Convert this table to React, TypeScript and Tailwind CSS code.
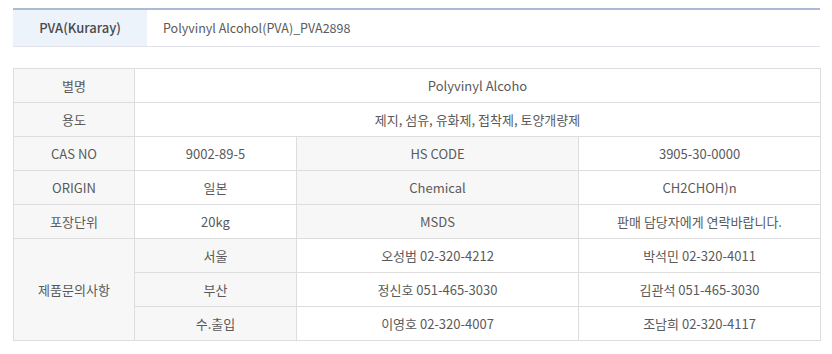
import React from 'react';

const th = 'border border-[#dddddd] bg-[#f7f7f7] font-normal';
const td = 'border border-[#dddddd] bg-white';

const contacts = [
  { region: '서울', a: '오성범 02-320-4212', b: '박석민 02-320-4011' },
  { region: '부산', a: '정신호 051-465-3030', b: '김관석 051-465-3030' },
  { region: '수.출입', a: '이영호 02-320-4007', b: '조남희 02-320-4117' },
];

const App = () => {
  return (
    <div
      className="w-[832px] h-[354px] bg-white px-[13px] pt-[8px] text-[13px] text-[#5a5a5a]"
      style={{ fontFamily: '"Noto Sans CJK KR", "Noto Sans", sans-serif' }}
    >
      <div className="flex h-[39px] w-[807px] border-t-2 border-b border-t-[#a8bcd6] border-b-[#e2e2ea]">
        <div className="flex w-[134px] items-center justify-center bg-[#edf3fa] text-[13px] font-medium text-[#4a4a4a]">
          PVA(Kuraray)
        </div>
        <div className="flex items-center pl-[16px] text-[12.5px]">Polyvinyl Alcohol(PVA)_PVA2898</div>
      </div>

      <table className="mt-[21px] w-[807px] table-fixed border-collapse text-center">
        <colgroup>
          <col className="w-[121px]" />
          <col className="w-[162px]" />
          <col className="w-[282px]" />
          <col className="w-[242px]" />
        </colgroup>
        <tbody>
          <tr className="h-[34px]">
            <th className={th}>별명</th>
            <td className={td} colSpan={3}>Polyvinyl Alcoho</td>
          </tr>
          <tr className="h-[34px]">
            <th className={th}>용도</th>
            <td className={td} colSpan={3}>제지, 섬유, 유화제, 접착제, 토양개량제</td>
          </tr>
          <tr className="h-[34px]">
            <th className={th}>CAS NO</th>
            <td className={td}>9002-89-5</td>
            <th className={th}>HS CODE</th>
            <td className={td}>3905-30-0000</td>
          </tr>
          <tr className="h-[34px]">
            <th className={th}>ORIGIN</th>
            <td className={td}>일본</td>
            <th className={th}>Chemical</th>
            <td className={td}>CH2CHOH)n</td>
          </tr>
          <tr className="h-[34px]">
            <th className={th}>포장단위</th>
            <td className={td}>20kg</td>
            <th className={th}>MSDS</th>
            <td className={td}>판매 담당자에게 연락바랍니다.</td>
          </tr>
          {contacts.map((c, i) => (
            <tr key={c.region} className="h-[34px]">
              {i === 0 && (
                <th className={th} rowSpan={3}>
                  제품문의사항
                </th>
              )}
              <th className={th}>{c.region}</th>
              <td className={td}>{c.a}</td>
              <td className={td}>{c.b}</td>
            </tr>
          ))}
        </tbody>
      </table>
    </div>
  );
};

export default App;
